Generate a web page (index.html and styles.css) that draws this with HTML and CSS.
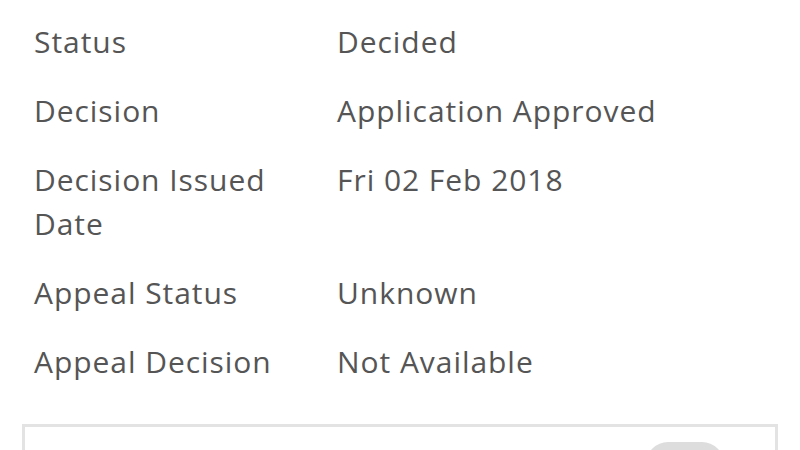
FILE: index.html
```html
<!DOCTYPE html>
<html>
<head>
<meta charset="utf-8">
<link rel="stylesheet" href="styles.css">
</head>
<body>
<div class="page">
  <dl class="details">
    <div class="row"><dt>Status</dt><dd>Decided</dd></div>
    <div class="row"><dt>Decision</dt><dd>Application Approved</dd></div>
    <div class="row"><dt>Decision Issued Date</dt><dd>Fri 02 Feb 2018</dd></div>
    <div class="row"><dt>Appeal Status</dt><dd>Unknown</dd></div>
    <div class="row"><dt>Appeal Decision</dt><dd>Not Available</dd></div>
  </dl>
  <div class="card">
    <div class="card-head">
      <span class="pill"></span>
    </div>
  </div>
</div>
</body>
</html>
```
FILE: styles.css
```css
html, body {
  margin: 0;
  padding: 0;
  background: #fff;
}
body {
  font-family: "Open Sans", "DejaVu Sans", sans-serif;
  color: #555;
  font-size: 30px;
  line-height: 44px;
  letter-spacing: 0.95px;
  overflow: hidden;
  height: 450px;
}
.page {
  padding: 8px 22px 0 22px;
}
.details {
  margin: 0;
  padding: 0 0 0 12px;
}
.row {
  display: grid;
  grid-template-columns: 280px 1fr;
  column-gap: 23px;
  padding: 12px 0 13px;
}
dt, dd {
  margin: 0;
}
.card {
  margin-top: 27px;
  border: 3px solid #e3e3e3;
  height: 60px;
}
.card-head {
  display: flex;
  justify-content: flex-end;
  padding: 15px 51px 0 0;
}
.pill {
  display: block;
  width: 78px;
  height: 44px;
  border-radius: 40px;
  background: #dddddd;
}
```
